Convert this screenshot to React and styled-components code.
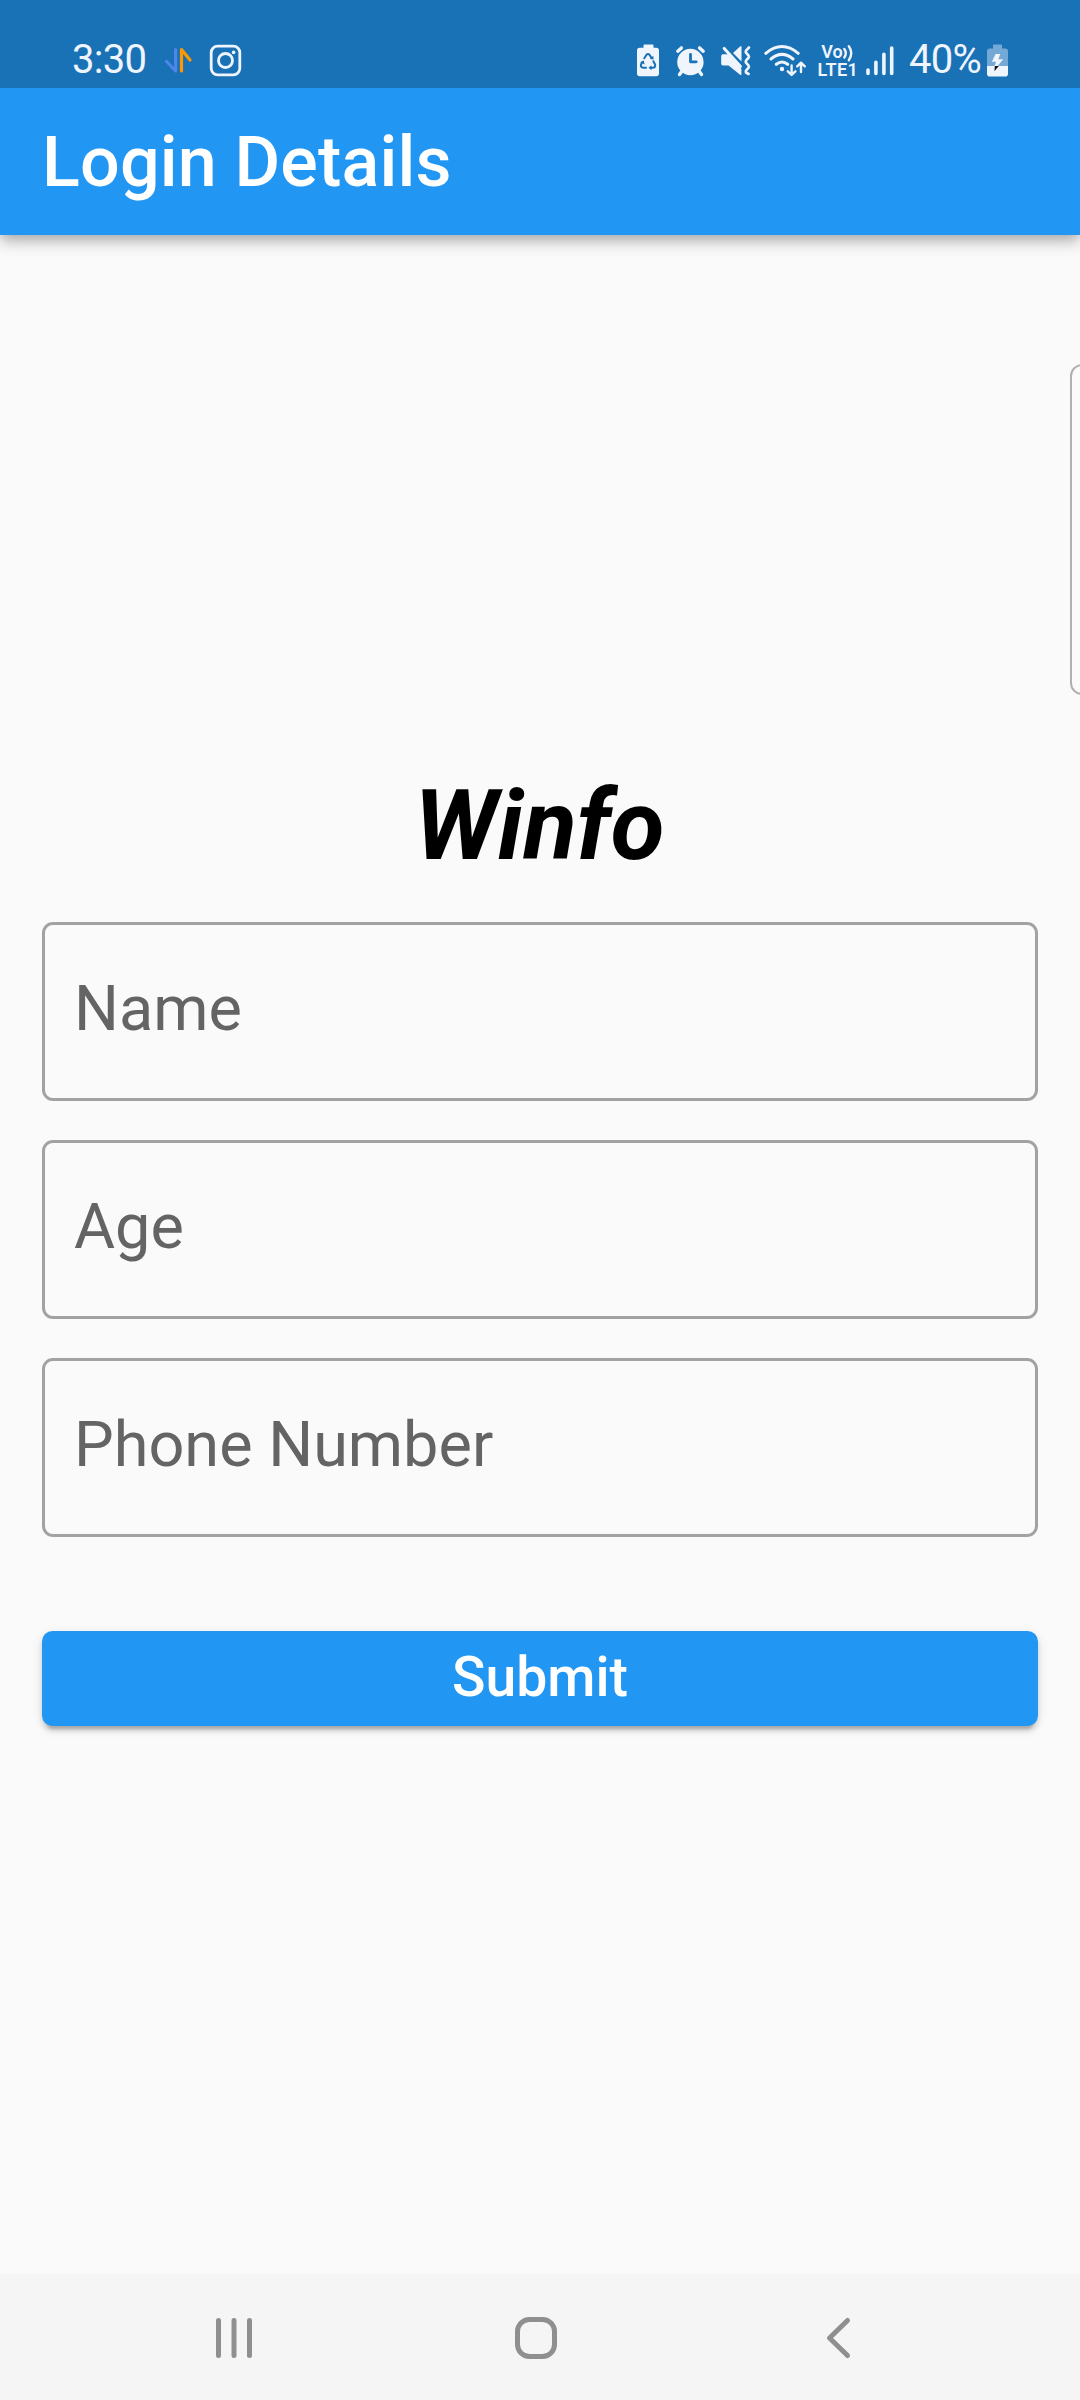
import React from "react";
import styled, { createGlobalStyle } from "styled-components";

const GlobalStyle = createGlobalStyle`
  * { box-sizing: border-box; }
  body { margin: 0; background: #fafafa; }
`;

const Screen = styled.div`
  display: flex;
  flex-direction: column;
  position: relative;
  width: 1080px;
  height: 2400px;
  overflow: hidden;
  background: #fafafa;
  font-family: Roboto, "Liberation Sans", sans-serif;
`;

const StatusBar = styled.div`
  position: relative;
  z-index: 1;
  display: flex;
  justify-content: space-between;
  flex: none;
  height: 88px;
  padding: 42px 69px 0 71px;
  background: #1971b6;
  color: #eff4fd;
`;

const StatusGroup = styled.div`
  display: flex;
  gap: ${(p) => p.$gap || 0}px;
  height: 38px;
`;

const StatusText = styled.span`
  width: ${(p) => p.$width}px;
  padding-left: ${(p) => p.$indent || 0}px;
  font-size: 40px;
  line-height: 36px;
  letter-spacing: -0.7px;
  white-space: nowrap;
`;

const StatusIcon = styled.svg`
  display: block;
  flex: none;
  height: 38px;
  fill: none;
  stroke-linecap: round;
  stroke-linejoin: round;
`;

const VolteLabel = styled.text`
  font-family: Roboto, "Liberation Sans", sans-serif;
  font-weight: 600;
  font-size: 18px;
  fill: #eff4fd;
`;

const AppBar = styled.header`
  display: flex;
  align-items: center;
  flex: none;
  height: 147px;
  padding: 0 42px;
  background: #2196f3;
  box-shadow: 0 5px 10px -2px rgba(0, 0, 0, 0.18), 0 10px 13px rgba(0, 0, 0, 0.11),
    0 3px 20px rgba(0, 0, 0, 0.09);
`;

const Title = styled.h1`
  margin: 0;
  font-size: 70px;
  line-height: 82px;
  font-weight: 500;
  letter-spacing: 0.18px;
  color: #fff;
`;

const Body = styled.main`
  display: flex;
  flex-direction: column;
  flex: 1;
  padding: 533px 42px 0;
`;

const Brand = styled.h2`
  margin: 0 0 39px;
  padding-right: 1px;
  font-size: 98.4px;
  line-height: 115px;
  font-weight: 700;
  font-style: italic;
  text-align: center;
  color: #000;
`;

const Fields = styled.form`
  display: flex;
  flex-direction: column;
  gap: 39px;
`;

const Field = styled.label`
  display: flex;
  height: 179px;
  padding: 47px 29px 0;
  border: 3px solid #a2a2a2;
  border-radius: 11px;
  font-size: 63px;
  line-height: 74px;
  color: #646464;
`;

const Submit = styled.button`
  height: 95px;
  margin-top: 94px;
  padding: 0 0 2px;
  border: 0;
  border-radius: 10.5px;
  background: #2196f3;
  box-shadow: 0 8px 3px -5px rgba(0, 0, 0, 0.18), 0 5px 5px rgba(0, 0, 0, 0.12),
    0 3px 12px rgba(0, 0, 0, 0.1);
  color: #fff;
  font-family: inherit;
  font-size: 55.3px;
  line-height: 66px;
  font-weight: 500;
`;

const EdgeHandle = styled.div`
  position: absolute;
  top: 364px;
  right: -20px;
  width: 30px;
  height: 331px;
  border: 2px solid #b0b0b0;
  border-radius: 12px;
  background: #fbfbfb;
`;

const NavBar = styled.nav`
  display: flex;
  align-items: center;
  flex: none;
  height: 126px;
  padding: 2px 218px 0 210px;
  justify-content: space-between;
  background: #f5f5f5;
`;

const NavIcon = styled.svg`
  display: block;
  width: 48px;
  height: 48px;
  fill: none;
  stroke: #8f8f8f;
  stroke-width: 5;
  stroke-linecap: round;
  stroke-linejoin: round;
`;

const INK = "#eff4fd";
const BAR = "#1971b6";

function DataArrows() {
  return (
    <StatusIcon width="32" viewBox="162 42 32 38" strokeWidth="3.2">
      <path d="M175.6 49.5V71L166.6 61.5" stroke="#4d86ea" />
      <path d="M181.5 71V49.5L190 60" stroke="#ff9800" />
    </StatusIcon>
  );
}

function InstagramIcon() {
  return (
    <StatusIcon width="38" viewBox="206 42 38 38" stroke={INK} strokeWidth="2.8">
      <rect x="211.2" y="46.2" width="28.6" height="28.6" rx="6.5" />
      <circle cx="225.5" cy="60.5" r="7" />
      <circle cx="233.6" cy="52.4" r="1.8" fill={INK} stroke="none" />
    </StatusIcon>
  );
}

function RecycleBattery() {
  return (
    <StatusIcon width="33" viewBox="632 42 33 38">
      <path
        d="M644.5 44.5h8q1 0 1 1v2.3h2.7q2.8 0 2.8 2.8v22.9q0 2.8-2.8 2.8h-16.4q-2.8 0-2.8-2.8v-22.9q0-2.8 2.8-2.8h3.7v-2.3q0-1 1-1z"
        fill={INK}
      />
      <g stroke={BAR} strokeWidth="2">
        <path d="M644.3 58.3l2.2-3.5q1.5-1.6 3 0l2.2 3.5" />
        <path d="M653.4 61.2l1.7 3.3q.6 3-2.3 3.3h-2" />
        <path d="M646 67.8h-2.8q-2.9-.4-2.2-3.2l1.4-2.5" />
      </g>
      <g fill={BAR}>
        <path d="M649.8 58.8l3.8.7-.3-3.7z" />
        <path d="M651.5 65.2v5l-3-2.5z" />
        <path d="M640.2 62.2l3.6-1.6.8 3.8z" />
      </g>
    </StatusIcon>
  );
}

function AlarmIcon() {
  return (
    <StatusIcon width="35" viewBox="673 42 35 38" stroke={INK}>
      <circle cx="690.4" cy="62" r="13.2" fill={INK} stroke="none" />
      <path d="M677.8 51.2l3.6-3.3M703.2 51.2l-3.6-3.3M682 71l-2.5 3.5M699 71l2.5 3.5" strokeWidth="3.4" />
      <path d="M690.5 54.5v7.3h5.7" stroke={BAR} strokeWidth="2.8" />
    </StatusIcon>
  );
}

function MuteVibrateIcon() {
  return (
    <StatusIcon width="38" viewBox="716 42 38 38">
      <path d="M723 54.2h5l13.4 14.6v6.2h-1L728.5 65.5H723q-1.8 0-1.8-1.8V56q0-1.8 1.8-1.8z" fill={INK} />
      <path d="M733 53l7.3-6.8h1.2v15.3z" fill={INK} />
      <path d="M724.2 48.4L740.5 66.5" stroke={INK} strokeWidth="3" />
      <path
        d="M749 47.5l-3 3.2q-.7 1 0 2l2.6 3q.7 1 0 2l-2.6 3q-.7 1 0 2l2.6 3q.7 1 0 2l-2.6 3q-.6 1 0 1.8l2.6 1.5"
        stroke={INK}
        strokeWidth="2.6"
      />
    </StatusIcon>
  );
}

function WifiIcon() {
  return (
    <StatusIcon width="46" viewBox="762 42 46 38" stroke={INK} strokeWidth="3">
      <path d="M765.8 53.3q16.2-13.6 32.4 0M771 59q11-9.2 22 0M776.3 64.3q5.7-4.5 11.4 0" />
      <circle cx="782" cy="69" r="2.2" fill={INK} stroke="none" />
      <path d="M791.6 65.5v9M787.8 71.3l3.8 3.6 3.8-3.6M801 72v-8.5M797.2 66.3l3.8-3.6 3.8 3.6" strokeWidth="2.4" />
    </StatusIcon>
  );
}

function VolteIcon() {
  return (
    <StatusIcon width="42" viewBox="816 42 42 38">
      <VolteLabel x="821.3" y="58.3" textLength="21.5">Vo</VolteLabel>
      <VolteLabel x="817.4" y="75.8" textLength="40.5">LTE1</VolteLabel>
      <path d="M844.3 49q3 4 0 8.5M848.8 46.2q5 7 0 14" stroke={INK} strokeWidth="2.4" />
    </StatusIcon>
  );
}

function SignalIcon() {
  return (
    <StatusIcon width="35" viewBox="866 42 35 38">
      <path
        d="M868 70v3.5M875.9 62.3v11.2M883.9 54.3v19.2M891.7 48v25.5"
        stroke={INK}
        strokeWidth="3.6"
      />
    </StatusIcon>
  );
}

function ChargingBattery() {
  return (
    <StatusIcon width="27" viewBox="984 42 27 38">
      <path
        d="M994 44.5h7q1 0 1 1v3h3.2q2.8 0 2.8 2.8V66h-21V51.3q0-2.8 2.8-2.8h3.2v-3q0-1 1-1z"
        fill="#75a9d5"
      />
      <path d="M987 66h21v7.7q0 2.8-2.8 2.8h-15.4q-2.8 0-2.8-2.8z" fill={INK} />
      <path d="M995.6 54h4.7l-2 5.2h4.9L997.6 66H994.5l1.6-4.3h-4.2z" fill={INK} />
      <path d="M994.8 66h4l-4.3 5.2z" fill="#111" />
    </StatusIcon>
  );
}

const FIELDS = ["Name", "Age", "Phone Number"];

export default function App() {
  return (
    <Screen>
      <GlobalStyle />
      <StatusBar>
        <StatusGroup $gap={12}>
          <StatusText $width={79} $indent={1}>3:30</StatusText>
          <DataArrows />
          <InstagramIcon />
        </StatusGroup>
        <StatusGroup>
          <StatusGroup $gap={8}>
            <RecycleBattery />
            <AlarmIcon />
            <MuteVibrateIcon />
            <WifiIcon />
            <VolteIcon />
            <SignalIcon />
          </StatusGroup>
          <StatusText $width={83} $indent={8}>40%</StatusText>
          <ChargingBattery />
        </StatusGroup>
      </StatusBar>
      <AppBar>
        <Title>Login Details</Title>
      </AppBar>
      <Body>
        <Brand>Winfo</Brand>
        <Fields>
          {FIELDS.map((name) => (
            <Field key={name}>{name}</Field>
          ))}
        </Fields>
        <Submit type="button">Submit</Submit>
      </Body>
      <EdgeHandle />
      <NavBar>
        <NavIcon viewBox="0 0 48 48">
          <path d="M8.5 6.5v35M24 6.5v35M39.5 6.5v35" />
        </NavIcon>
        <NavIcon viewBox="0 0 48 48">
          <rect x="5.5" y="5.5" width="37" height="37" rx="12" />
        </NavIcon>
        <NavIcon viewBox="0 0 48 48">
          <path d="M33.5 6.5L15.5 24l18 17.5" />
        </NavIcon>
      </NavBar>
    </Screen>
  );
}
